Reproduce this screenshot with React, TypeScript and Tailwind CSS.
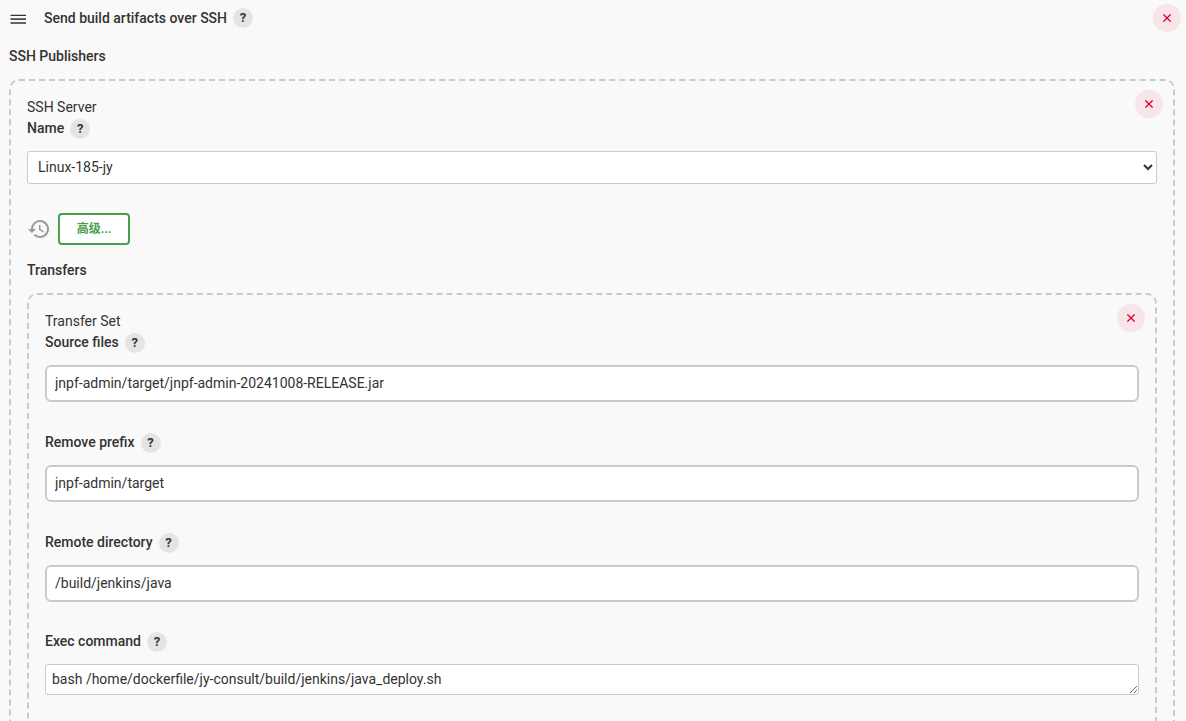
import { useId, type ReactNode } from 'react';

function HelpButton({ subject }: { subject: string }) {
  return (
    <button
      type="button"
      aria-label={`Help for feature: ${subject}`}
      className="flex size-5 shrink-0 items-center justify-center rounded-full bg-[#e4e4e4] text-[13px] leading-5 font-bold text-[#333]"
    >
      ?
    </button>
  );
}

function DeleteButton({ label }: { label: string }) {
  return (
    <button
      type="button"
      aria-label={label}
      className="flex size-7 shrink-0 items-center justify-center rounded-full bg-[#f7e5e9] text-[#e0002a]"
    >
      <svg viewBox="0 0 8 8" className="size-2" fill="none" stroke="currentColor" strokeWidth="1.3" aria-hidden="true">
        <path d="M.4.4l7.2 7.2M7.6.4L.4 7.6" />
      </svg>
    </button>
  );
}

function FieldLabel({ htmlFor, children }: { htmlFor: string; children: string }) {
  return (
    <div className="flex h-[21px] items-center gap-[6px]">
      <label htmlFor={htmlFor} className="font-medium">
        {children}
      </label>
      <HelpButton subject={children} />
    </div>
  );
}

function TextField({ label, value }: { label: string; value: string }) {
  const id = useId();
  return (
    <div>
      <FieldLabel htmlFor={id}>{label}</FieldLabel>
      <input
        id={id}
        type="text"
        defaultValue={value}
        className="mt-3 block h-[37px] w-full rounded-md border-2 border-[#c3cdd1] bg-white px-2 pb-[2px] outline-none"
      />
    </div>
  );
}

function RepeatedChunk({ title, children }: { title: string; children: ReactNode }) {
  return (
    <section className="relative mt-3 rounded-[10px] border-2 border-dashed border-[#c3cdd1] p-4">
      <div className="absolute top-[9px] right-[10px]">
        <DeleteButton label={`Delete ${title}`} />
      </div>
      <div>{title}</div>
      {children}
    </section>
  );
}

function HistoryIcon() {
  return (
    <svg viewBox="0 0 24 24" className="size-6" fill="#999" aria-hidden="true">
      <path d="M13 3a9 9 0 0 0-9 9H1l3.89 3.89.07.14L9 12H6a7 7 0 1 1 2.06 4.94l-1.42 1.42A9 9 0 1 0 13 3zm-1 5v5l4.28 2.54.72-1.21-3.5-2.08V8H12z" />
    </svg>
  );
}

export default function App() {
  return (
    <main className="h-screen overflow-hidden bg-[#f9f9f9] pl-[9px] font-['Roboto','Noto_Sans_CJK_SC',sans-serif] text-sm leading-[21px] text-[#333]">
      <header className="flex h-9 items-center justify-between pt-1 pr-[5px] pb-1">
        <div className="flex items-center gap-[6px]">
          <svg viewBox="0 0 18 12" className="mr-[11px] h-3 w-[18px]" aria-hidden="true">
            <path d="M1.5 3.3h15.5M1.5 11h15.5" stroke="#333" strokeWidth="1.3" />
            <path d="M1.5 7.1h15.5" stroke="#444" strokeWidth="1.7" />
          </svg>
          <h1 className="font-medium">Send build artifacts over SSH</h1>
          <HelpButton subject="Send build artifacts over SSH" />
        </div>
        <DeleteButton label="Delete build step" />
      </header>
      <div className="pt-[10px] pr-[11px]">
        <h2 className="font-medium">SSH Publishers</h2>
        <RepeatedChunk title="SSH Server">
          <FieldLabel htmlFor="server-name">Name</FieldLabel>
          <select
            id="server-name"
            className="mt-3 block h-[33px] w-full rounded-[3px] border border-[#c3cdd1] bg-white px-[6px] pb-[2px] outline-none"
          >
            <option>Linux-185-jy</option>
          </select>
          <div className="mt-[29px] flex items-center gap-[7px]">
            <HistoryIcon />
            <button
              type="button"
              className="h-8 w-[72px] rounded-[4px] border-2 border-[#4b9f4b] bg-white text-xs font-bold text-[#4b9f4b]"
            >
              高级...
            </button>
          </div>
          <h3 className="mt-[15px] font-medium">Transfers</h3>
          <RepeatedChunk title="Transfer Set">
            <div className="flex flex-col gap-[30px]">
              <TextField label="Source files" value="jnpf-admin/target/jnpf-admin-20241008-RELEASE.jar" />
              <TextField label="Remove prefix" value="jnpf-admin/target" />
              <TextField label="Remote directory" value="/build/jenkins/java" />
            </div>
            <div className="mt-[29px] mb-10">
              <FieldLabel htmlFor="exec-command">Exec command</FieldLabel>
              <textarea
                id="exec-command"
                rows={1}
                defaultValue="bash /home/dockerfile/jy-consult/build/jenkins/java_deploy.sh"
                className="mt-3 block h-[31px] w-full resize-y overflow-hidden rounded-[3px] border border-[#c3cdd1] bg-white px-[6px] py-1 outline-none"
              />
            </div>
          </RepeatedChunk>
        </RepeatedChunk>
      </div>
    </main>
  );
}
